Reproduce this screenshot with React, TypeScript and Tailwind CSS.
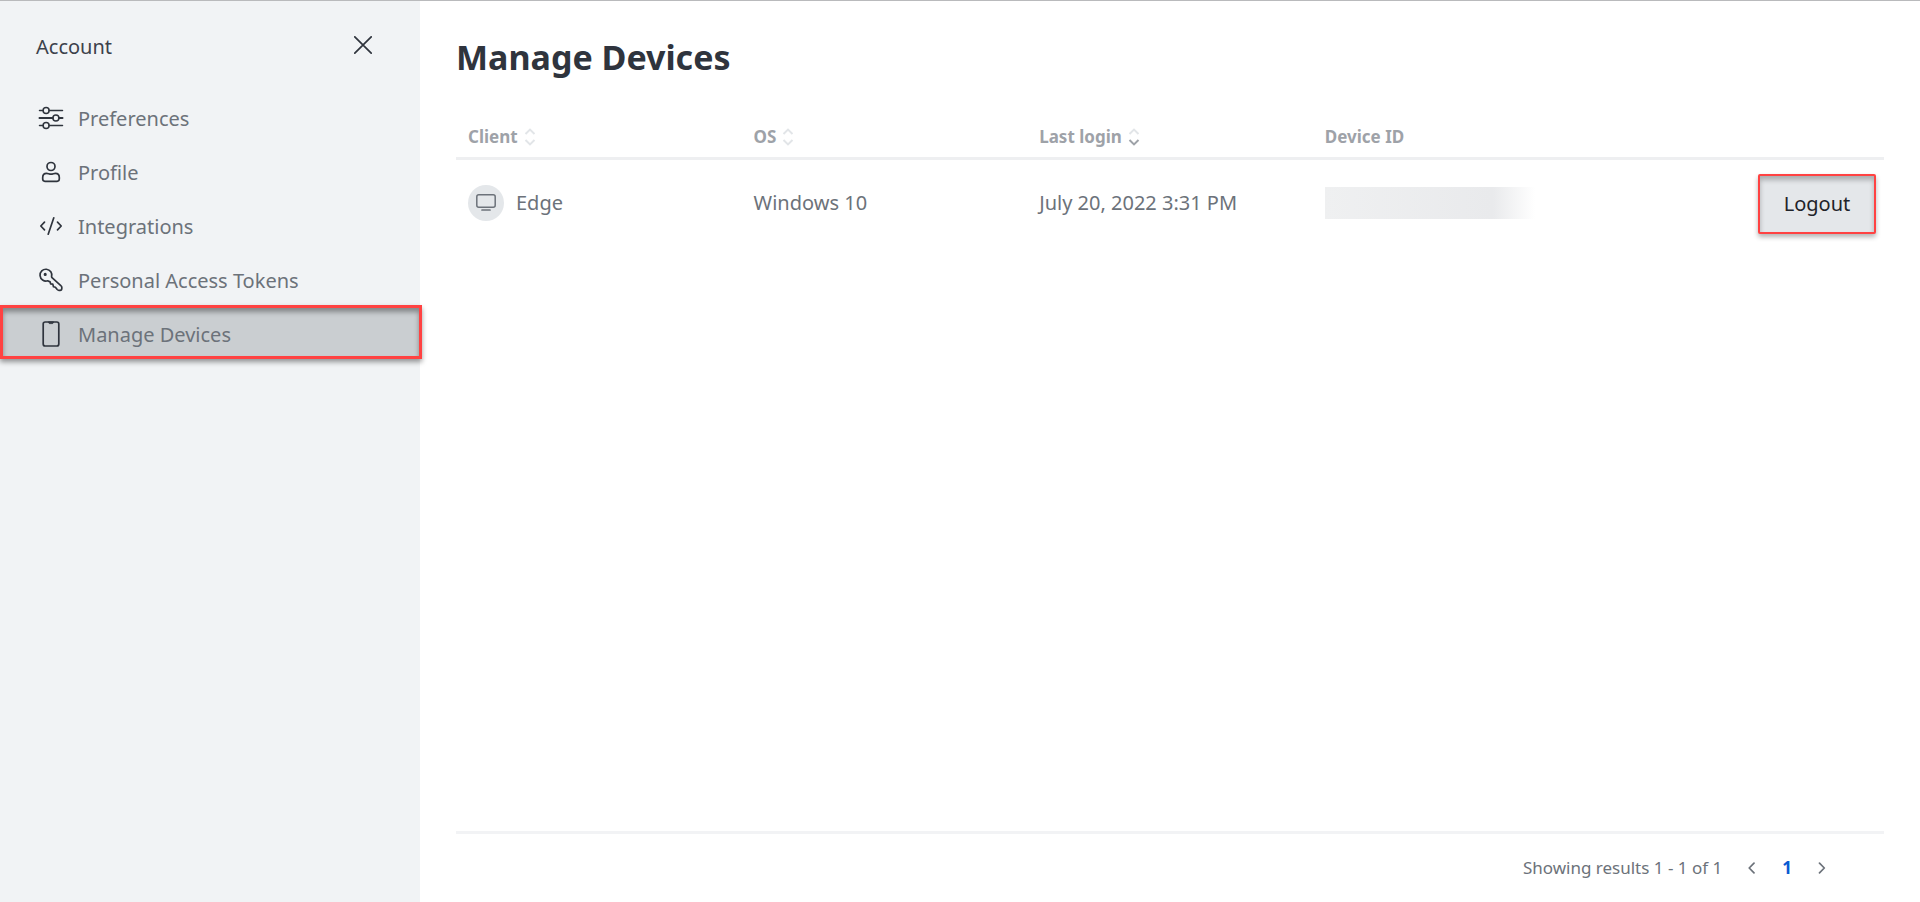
import type { ReactNode } from "react";

function Icon({ children, size = 26 }: { children: ReactNode; size?: number }) {
  return (
    <svg
      width={size}
      height={size}
      viewBox={`0 0 ${size} ${size}`}
      fill="none"
      stroke="currentColor"
      strokeWidth="1.7"
      strokeLinecap="round"
      strokeLinejoin="round"
      aria-hidden="true"
      className="shrink-0"
    >
      {children}
    </svg>
  );
}

const navItems = [
  {
    label: "Preferences",
    icon: (
      <Icon>
        <path d="M1.5 5.5h3.6M11.1 5.5h13.4" strokeWidth="1.5" />
        <path d="M1.5 13h13.4M20.9 13h3.6" strokeWidth="2" />
        <path d="M1.5 20.5h3.6M11.1 20.5h13.4" strokeWidth="1.5" />
        <circle cx="8.1" cy="5.5" r="3" strokeWidth="1.5" />
        <circle cx="17.9" cy="13" r="3" strokeWidth="1.5" />
        <circle cx="8.1" cy="20.5" r="3" strokeWidth="1.5" />
      </Icon>
    ),
  },
  {
    label: "Profile",
    icon: (
      <Icon>
        <circle cx="13" cy="7.5" r="4" />
        <path d="M8.6 14.3c1.4 0 2.6.9 4.4.9s3-.9 4.4-.9c2.3 0 3.9 1.7 3.9 4.2v1.6c0 1.3-.9 2.2-2.2 2.2H6.9c-1.3 0-2.2-.9-2.2-2.2v-1.6c0-2.5 1.6-4.2 3.9-4.2z" />
      </Icon>
    ),
  },
  {
    label: "Integrations",
    icon: (
      <Icon>
        <path d="M6.5 9.2 2.8 13l3.7 3.8M19.5 9.2l3.7 3.8-3.7 3.8M15.8 4.8 10.2 21.2" />
      </Icon>
    ),
  },
  {
    label: "Personal Access Tokens",
    icon: (
      <Icon>
        <path d="M13.6 9.8a5.9 5.9 0 1 0-4 4l2.5 1.1.5 1.9 2.2.3.7 2.7 1.9.5 1.8 2.2c.5.5 1 .8 1.7.8h1.2c1 0 1.7-.7 1.7-1.7v-1.3c0-.6-.2-1.1-.7-1.5l-9.1-8.1z" />
        <circle cx="7.2" cy="7.4" r="0.9" fill="currentColor" stroke="none" />
        <circle cx="7.2" cy="7.4" r="0.7" />
      </Icon>
    ),
  },
  {
    label: "Manage Devices",
    icon: (
      <Icon>
        <rect x="5.2" y="1" width="15.6" height="24" rx="2" />
        <path d="M10.5 1.2c.3 1.2.7 1.4 1.4 1.4h2.2c.7 0 1.1-.2 1.4-1.4z" fill="currentColor" strokeWidth="0.8" />
      </Icon>
    ),
  },
];

function SortIcon({ descending }: { descending?: boolean }) {
  return (
    <svg width="12" height="18" viewBox="0 0 12 18" fill="none" strokeWidth="2" aria-hidden="true">
      <path d="M1.5 6 6 1.6 10.5 6" className="stroke-[#e2e5e8]" />
      <path
        d="M1.5 12 6 16.4 10.5 12"
        className={descending ? "stroke-[#9ea2a8]" : "stroke-[#e2e5e8]"}
      />
    </svg>
  );
}

function SortHeader({ label, descending }: { label: string; descending?: boolean }) {
  return (
    <th scope="col" className="px-3 pb-1.5 text-left font-bold">
      <button type="button" className="flex items-center gap-1.5">
        {label}
        <SortIcon descending={descending} />
      </button>
    </th>
  );
}

export default function App() {
  return (
    <div className="flex min-h-screen border-t border-[#b9babc] bg-white font-['Noto_Sans','Open_Sans',sans-serif] text-xl leading-7 text-[#6c727a]">
      <aside className="w-[420px] shrink-0 bg-[#f1f3f5]">
        <header className="flex items-center justify-between pt-7 pr-12 pb-8 pl-9 text-[#3c414b]">
          <h2 className="pt-1">Account</h2>
          <button type="button" aria-label="Close" className="text-[#2f343d]">
            <Icon size={18}>
              <path d="M.8.8l16.4 16.4M17.2.8.8 17.2" />
            </Icon>
          </button>
        </header>
        <nav className="-mt-1">
          <ul>
            {navItems.map((item) => {
              const active = item.label === "Manage Devices";
              return (
                <li key={item.label}>
                  <a
                    href="#"
                    aria-current={active ? "page" : undefined}
                    className={
                      active
                        ? "relative -mr-0.5 flex h-[54px] items-center gap-3.5 border-[3px] border-[#ff4242] bg-[#caced1] pt-1 pl-[35px] shadow-[0_3px_5px_rgba(0,0,0,0.4),inset_0_4px_5px_rgba(0,0,0,0.35)]"
                        : "flex h-[54px] items-center gap-3.5 pt-1 pl-[38px]"
                    }
                  >
                    <span className="text-[#2f343d]">{item.icon}</span>
                    <span className="pt-0.5">{item.label}</span>
                  </a>
                </li>
              );
            })}
          </ul>
        </nav>
      </aside>

      <main className="flex min-w-0 flex-1 flex-col px-9 pt-8">
        <h1 className="text-[34px] leading-12 font-bold text-[#2f343d]">Manage Devices</h1>

        <div className="flex-1 pt-[42px]">
          <table className="w-full table-fixed border-collapse">
            <thead className="border-b-[3px] border-[#eeeff1] text-[17px] text-[#9ea2a8]">
              <tr>
                <SortHeader label="Client" />
                <SortHeader label="OS" />
                <SortHeader label="Last login" descending />
                <th scope="col" className="px-3 pb-1.5 text-left font-bold">
                  Device ID
                </th>
                <td />
              </tr>
            </thead>
            <tbody>
              <tr>
                <td className="px-3 pt-3">
                  <div className="flex items-center gap-3">
                    <span className="flex size-9 items-center justify-center rounded-full bg-[#e4e7ea]">
                      <Icon size={20}>
                        <rect x="0.8" y="1.8" width="18.4" height="12.4" rx="2" strokeWidth="1.5" />
                        <path d="M6 17h8" />
                      </Icon>
                    </span>
                    Edge
                  </div>
                </td>
                <td className="px-3 pt-3">Windows 10</td>
                <td className="px-3 pt-3 whitespace-nowrap">July 20, 2022 3:31 PM</td>
                <td className="px-3 pt-3">
                  <div
                    role="img"
                    aria-label="Hidden device ID"
                    className="h-8 w-[210px] bg-linear-to-r from-[#eff0f1] via-[#e9eaec] via-80% to-white"
                  />
                </td>
                <td className="pt-3.5 pr-2 text-right">
                  <button
                    type="button"
                    className="h-[60px] w-[118px] rounded-xs border-2 border-[#ff4242] bg-[#e4e7ea] text-[#1f2329] shadow-[0_3px_5px_rgba(0,0,0,0.3),inset_0_4px_5px_rgba(0,0,0,0.25)]"
                  >
                    Logout
                  </button>
                </td>
              </tr>
            </tbody>
          </table>
        </div>

        <footer className="flex h-[71px] items-center justify-end border-t-[3px] border-[#f2f3f5] pr-14 text-[17px]">
          <span>Showing results 1 - 1 of 1</span>
          <nav aria-label="Pagination" className="ml-6 flex items-center gap-6">
            <button type="button" aria-label="Previous page">
              <Icon size={12}>
                <path d="M8 1.2 3.2 6 8 10.8" />
              </Icon>
            </button>
            <button type="button" aria-current="page" className="font-bold text-[#095ad2]">
              1
            </button>
            <button type="button" aria-label="Next page">
              <Icon size={12}>
                <path d="M3.5 1.2 8.3 6l-4.8 4.8" />
              </Icon>
            </button>
          </nav>
        </footer>
      </main>
    </div>
  );
}
